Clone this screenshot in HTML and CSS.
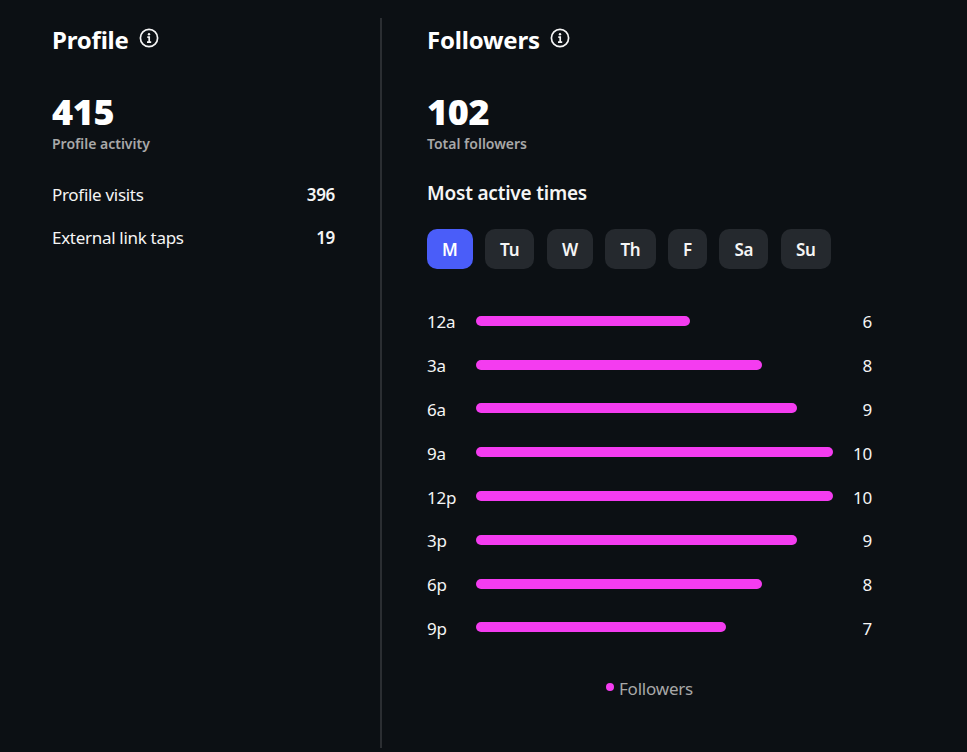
FILE: index.html
```html
<!DOCTYPE html>
<html lang="en">
<head>
  <meta charset="UTF-8" />
  <title>Insights</title>
  <link rel="stylesheet" href="styles.css">
</head>
<body>
  <div class="page">

    <section class="profile">
      <div class="heading">
        <h2>Profile</h2>
        <svg class="info" viewBox="0 0 20 20" fill="none" stroke="currentColor">
          <circle cx="10" cy="10" r="8.6" stroke-width="1.7"/>
          <circle cx="10" cy="6.2" r="1.2" fill="currentColor" stroke="none"/>
          <path d="M8.3 9.2H10.2V14M8 14.1H12.2" stroke-width="1.7"/>
        </svg>
      </div>
      <div class="total">415</div>
      <div class="caption">Profile activity</div>
      <div class="stat-row stat-first"><span>Profile visits</span><b>396</b></div>
      <div class="stat-row"><span>External link taps</span><b>19</b></div>
    </section>

    <section class="followers">
      <div class="heading">
        <h2>Followers</h2>
        <svg class="info" viewBox="0 0 20 20" fill="none" stroke="currentColor">
          <circle cx="10" cy="10" r="8.6" stroke-width="1.7"/>
          <circle cx="10" cy="6.2" r="1.2" fill="currentColor" stroke="none"/>
          <path d="M8.3 9.2H10.2V14M8 14.1H12.2" stroke-width="1.7"/>
        </svg>
      </div>
      <div class="total">102</div>
      <div class="caption">Total followers</div>
      <h3>Most active times</h3>

      <div class="days">
        <button class="day day-active">M</button>
        <button class="day">Tu</button>
        <button class="day">W</button>
        <button class="day">Th</button>
        <button class="day">F</button>
        <button class="day">Sa</button>
        <button class="day">Su</button>
      </div>

      <div class="chart">
        <div class="chart-row"><span>12a</span><div class="bar" style="width: 60%"></div><span class="value">6</span></div>
        <div class="chart-row"><span>3a</span><div class="bar" style="width: 80%"></div><span class="value">8</span></div>
        <div class="chart-row"><span>6a</span><div class="bar" style="width: 90%"></div><span class="value">9</span></div>
        <div class="chart-row"><span>9a</span><div class="bar" style="width: 100%"></div><span class="value">10</span></div>
        <div class="chart-row"><span>12p</span><div class="bar" style="width: 100%"></div><span class="value">10</span></div>
        <div class="chart-row"><span>3p</span><div class="bar" style="width: 90%"></div><span class="value">9</span></div>
        <div class="chart-row"><span>6p</span><div class="bar" style="width: 80%"></div><span class="value">8</span></div>
        <div class="chart-row"><span>9p</span><div class="bar" style="width: 70%"></div><span class="value">7</span></div>
      </div>

      <div class="legend"><i class="dot"></i>Followers</div>
    </section>

  </div>
</body>
</html>
```

FILE: styles.css
```css
* {
  box-sizing: border-box;
  margin: 0;
  padding: 0;
}

html, body {
  height: 100%;
}

body {
  background: #0c1014;
  color: #f5f5f5;
  font-family: 'Noto Sans', 'Open Sans', sans-serif;
  overflow: hidden;
}

.page {
  display: flex;
  align-items: stretch;
  height: 748px;
  padding-top: 18px;
}

.profile {
  width: 382px;
  padding: 0 45px 0 52px;
  border-right: 2px solid #2b2e32;
}

.followers {
  width: 490px;
  padding-left: 45px;
}

.heading {
  display: flex;
  align-items: center;
  gap: 10px;
  height: 42px;
}

h2 {
  font-size: 24px;
  font-weight: 700;
  letter-spacing: -0.2px;
  color: #fff;
}

.info {
  width: 20px;
  height: 20px;
  margin-top: -2px;
  color: #f5f5f5;
}

.total {
  margin-top: 29px;
  font-size: 36px;
  font-weight: 900;
  line-height: 46px;
  letter-spacing: -0.4px;
  color: #fff;
}

.caption {
  font-size: 14px;
  font-weight: 600;
  line-height: 18px;
  color: #a8a8a8;
}

.stat-row {
  display: flex;
  justify-content: space-between;
  align-items: center;
  height: 43px;
  font-size: 17px;
  letter-spacing: -0.3px;
}

.stat-first {
  margin-top: 20px;
}

.stat-row b {
  font-weight: 600;
}

h3 {
  margin-top: 28px;
  font-size: 19px;
  font-weight: 600;
  line-height: 24px;
  letter-spacing: -0.2px;
}

.days {
  display: flex;
  gap: 12.5px;
  margin-top: 24px;
}

.day {
  height: 40px;
  padding: 0 15px;
  border: none;
  border-radius: 10px;
  background: #25292e;
  color: #f5f5f5;
  font-family: inherit;
  font-size: 17px;
  font-weight: 600;
  letter-spacing: -0.2px;
}

.day-active {
  background: #4a5df9;
  color: #fff;
}

.chart {
  display: flex;
  flex-direction: column;
  gap: 14px;
  margin-top: 38px;
}

.chart-row {
  display: grid;
  grid-template-columns: 49px 357px 39px;
  align-items: center;
  height: 29.8px;
  font-size: 17px;
  letter-spacing: -0.2px;
}

.chart-row .value {
  grid-column: 3;
  text-align: right;
}

.bar {
  height: 10px;
  margin-top: -2px;
  border-radius: 5px;
  background: #f43cf0;
}

.legend {
  display: flex;
  justify-content: center;
  align-items: center;
  gap: 5px;
  width: 445px;
  margin-top: 34px;
  font-size: 17px;
  letter-spacing: -0.2px;
  color: #a8a8a8;
}

.dot {
  width: 8px;
  height: 8px;
  margin-top: -3px;
  border-radius: 50%;
  background: #f43cf0;
}
```
